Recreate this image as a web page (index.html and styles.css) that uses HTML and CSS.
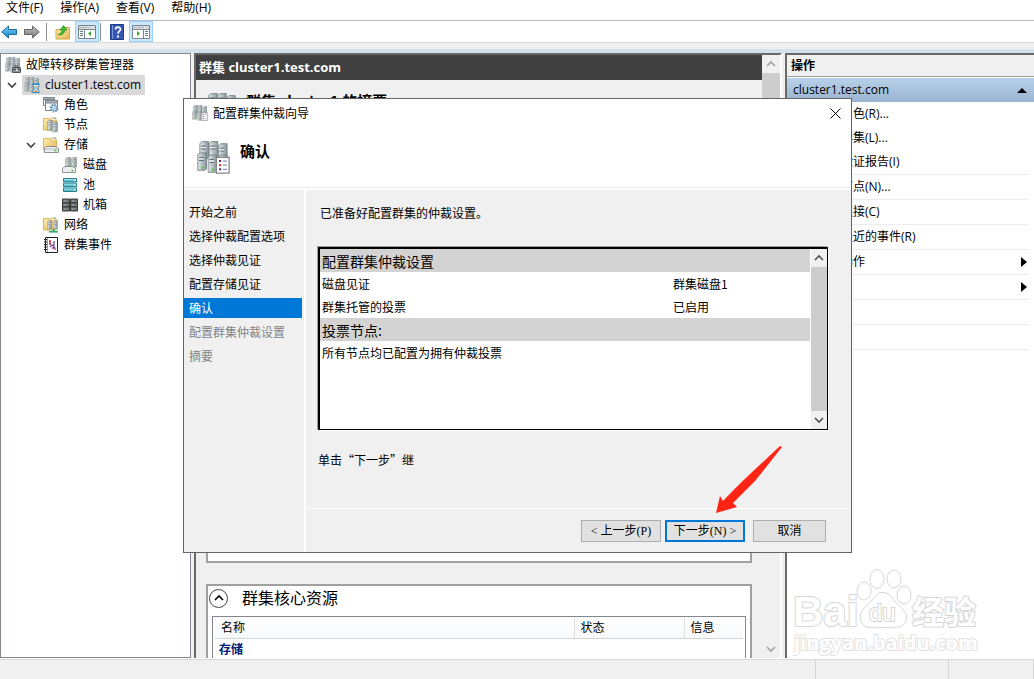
FILE: index.html
```html
<!DOCTYPE html>
<html lang="zh-CN">
<head>
    <meta charset="UTF-8">
    <meta name="viewport" content="width=device-width, initial-scale=1.0">
    <title>故障转移群集管理器</title>
    <link rel="stylesheet" href="styles.css">
</head>
<body>
    <!-- Shared icons -->
    <svg class="defs" width="0" height="0" aria-hidden="true">
        <defs>
            <linearGradient id="metal" x1="0" x2="1">
                <stop offset="0" stop-color="#e6eaeb"/>
                <stop offset="1" stop-color="#87949a"/>
            </linearGradient>
            <linearGradient id="blue" x1="0" x2="0" y1="0" y2="1">
                <stop offset="0" stop-color="#7fd0f7"/>
                <stop offset="1" stop-color="#0d7fc4"/>
            </linearGradient>
            <linearGradient id="gray" x1="0" x2="0" y1="0" y2="1">
                <stop offset="0" stop-color="#c4c4c4"/>
                <stop offset="1" stop-color="#777"/>
            </linearGradient>
            <linearGradient id="folder" x1="0" x2="1" y1="0" y2="1">
                <stop offset="0" stop-color="#fff0b5"/>
                <stop offset="1" stop-color="#e3b54e"/>
            </linearGradient>
        </defs>
        <symbol id="tower" viewBox="0 0 5 9">
            <path d="M.4 1.2 1.6.3H4.6V8L3.6 8.7H.4z" fill="url(#metal)" stroke="#6f7c82" stroke-width=".4"/>
            <path d="M1 2.5h2.2M1 3.9h2.2" stroke="#5f6d74" stroke-width=".5"/>
            <path d="M1 3.2h2.2" stroke="#fff" stroke-width=".5"/>
            <rect x="2.2" y="7" width=".9" height=".9" fill="#4fc51e"/>
        </symbol>
        <symbol id="servers" viewBox="0 0 16 16">
            <use href="#tower" x="1" y="0" width="5" height="9"/>
            <use href="#tower" x="5.5" y="0" width="5" height="9"/>
            <use href="#tower" x="10" y="1" width="5" height="9"/>
            <use href="#tower" x="0" y="5" width="5" height="10"/>
            <use href="#tower" x="5" y="6" width="5" height="10"/>
            <use href="#tower" x="10" y="6" width="5" height="10"/>
        </symbol>
        <symbol id="manager" viewBox="0 0 16 16">
            <use href="#servers"/>
            <rect x="7.5" y="10.5" width="8" height="5" rx=".5" fill="#8b9296" stroke="#50585c"/>
            <path d="M10 10.500V9h3v1.500M8 12.500h7" fill="none" stroke="#50585c"/>
            <path d="M11 12h1.500v2H11z" fill="#eee"/>
        </symbol>
        <symbol id="cluster" viewBox="0 0 16 16">
            <use href="#servers"/>
            <path d="M9 7h6v2l-2 2.500 2 2.500v2H9v-2l2-2.500L9 9z" fill="#e6f5fd" stroke="#2586b8" stroke-width=".8"/>
            <path d="M8.500 7.300h7M8.500 15.700h7" stroke="#2b8ec2" stroke-width="1.300"/>
            <path d="M10 15l2-2.500 2 2.500zM10.500 9h3L12 11z" fill="#e38b3e"/>
        </symbol>
        <symbol id="wizard" viewBox="0 0 16 16">
            <use href="#servers"/>
            <path d="M9.400 7.900h6.200v7.700H9.400z" fill="#fff" stroke="#858585" stroke-width=".6"/>
            <path d="M10.700 9.200h1v1h-1zM10.700 13.200h1v1h-1z" fill="#4d2b62"/>
            <path d="M10.700 11.200h1v1h-1z" fill="#e02a20"/>
            <path d="M12.500 9.700h2M12.500 11.700h2M12.500 13.700h2" stroke="#8792bb" stroke-width=".6"/>
        </symbol>
        <symbol id="roles" viewBox="0 0 16 16">
            <path d="M.5.500h11v8H.5z" fill="#f5f7f8" stroke="#7c878d"/>
            <path d="M.5.500h11v2H.5z" fill="#a8b1b6" stroke="#7c878d"/>
            <path d="M2.500 3.500h12v10h-12z" fill="#fff" stroke="#7c878d"/>
            <path d="M2.500 3.500h12v2.500h-12z" fill="#a8b1b6" stroke="#7c878d"/>
            <circle cx="11" cy="11" r="3.500" fill="#d9ecfa" stroke="#6790b7" stroke-width="2" stroke-dasharray="1.400 1.300"/>
            <circle cx="11" cy="11" r="2.800" fill="#cfe3f4" stroke="#6790b7" stroke-width=".8"/>
            <circle cx="11" cy="11" r="1.200" fill="#fff" stroke="#6790b7" stroke-width=".5"/>
        </symbol>
        <symbol id="folder-base" viewBox="0 0 16 16">
            <path d="M.5 1.500h6l1 1.500h6v10H.5z" fill="url(#folder)" stroke="#d3a843" stroke-width=".8"/>
            <path d="M8 .8h5v3H8z" fill="#fff3c8" stroke="#d3a843" stroke-width=".6"/>
            <path d="M10.500 1.500h2" stroke="#4ba8e8"/>
        </symbol>
        <symbol id="nodes" viewBox="0 0 16 16">
            <use href="#folder-base"/>
            <use href="#tower" x="4" y="3" width="6" height="11"/>
            <use href="#tower" x="9" y="4" width="6" height="12"/>
        </symbol>
        <symbol id="storage" viewBox="0 0 16 16">
            <use href="#folder-base"/>
            <path d="M3 9.500h10l2.500 2v4H1.500v-4z" fill="#eceef0" stroke="#747c81" stroke-width=".8"/>
            <path d="M2 12h13" stroke="#9da5a9" stroke-width=".7"/>
            <rect x="11.500" y="13" width="2" height="1.300" fill="#42b924"/>
        </symbol>
        <symbol id="disks" viewBox="0 0 16 16">
            <use href="#tower" x="3" y="0" width="6" height="11"/>
            <use href="#tower" x="9" y="0" width="6" height="11"/>
            <path d="M3 9.500h8l2.500 2v4H.5v-4z" fill="#eceef0" stroke="#747c81" stroke-width=".8"/>
            <rect x="9.500" y="13" width="2" height="1.300" fill="#42b924"/>
        </symbol>
        <symbol id="pool" viewBox="0 0 16 16">
            <path d="M1.500 1.500h13v3.500h-13zM1.500 6.200h13v3.500h-13zM1.500 11h13v3.500h-13z" fill="#57bfcb" stroke="#26808f"/>
            <path d="M2 2.500h12M2 7.200h12M2 12h12" stroke="#b8edf2" stroke-width=".8"/>
            <path d="M12 3.500h1.500M12 8.200h1.500M12 13h1.500" stroke="#fff"/>
        </symbol>
        <symbol id="chassis" viewBox="0 0 16 16">
            <path d="M.5 2h7v12h-7zM8.500 2h7v12h-7z" fill="#66696b" stroke="#3c3c3c"/>
            <path d="M1 5.800h6.500M1 9.800h6.500M9 5.800h6.500M9 9.800h6.500" stroke="#2c2c2c" stroke-width=".8"/>
            <path d="M1.500 4h3M1.500 8h3M1.500 12h3M9.500 4h3M9.500 8h3M9.500 12h3" stroke="#b4b8ba"/>
            <path d="M5.500 4h1M5.500 8h1M5.500 12h1M13.500 4h1M13.500 8h1M13.500 12h1" stroke="#6bd837"/>
        </symbol>
        <symbol id="network" viewBox="0 0 16 16">
            <use href="#folder-base"/>
            <use href="#tower" x="4" y="3" width="5" height="10"/>
            <use href="#tower" x="10" y="3" width="5" height="10"/>
            <path d="M6 14.800h9" stroke="#20ad78" stroke-width="1.600"/>
            <path d="M10.500 12v3" stroke="#20ad78" stroke-width="2"/>
        </symbol>
        <symbol id="events" viewBox="0 0 16 16">
            <path d="M2.500.500h12v15h-12z" fill="#fff" stroke="#222"/>
            <path d="M4.500 1v14" stroke="#999"/>
            <path d="M1 2.500h3M1 5h3M1 7.500h3M1 10h3M1 12.500h3" stroke="#222"/>
            <path d="M7 3v5M9 11h2" stroke="#d02638" stroke-width="1.600"/>
            <path d="M7 10l2-2 2 1V4M10 10l2 1v2" fill="none" stroke="#5b3da6" stroke-width="1.200"/>
        </symbol>
        <symbol id="chev-down" viewBox="0 0 10 10"><path d="M1 3l4 4 4-4" fill="none" stroke="currentColor" stroke-width="1.600"/></symbol>
        <symbol id="chev-up" viewBox="0 0 10 10"><path d="M1 7l4-4 4 4" fill="none" stroke="currentColor" stroke-width="1.600"/></symbol>
        <symbol id="console" viewBox="0 0 18 14">
            <path d="M.5.500h17v13H.5z" fill="#fff" stroke="#7b868e"/>
            <path d="M1 1.500h16v2H1z" fill="#b3bcc2"/>
            <path d="M12 2.500h1.500M14.500 2.500H16" stroke="#fff"/>
            <path d="M1 4.500h16" stroke="#7b868e"/>
        </symbol>
    </svg>

    <nav class="menubar">
        <a href="#">文件(F)</a>
        <a href="#">操作(A)</a>
        <a href="#">查看(V)</a>
        <a href="#">帮助(H)</a>
    </nav>

    <div class="toolbar">
        <button class="tool" aria-label="后退">
            <svg width="16" height="16" viewBox="0 0 16 16"><path d="M.7 8 7.500 2v3.500h8v5h-8V14z" fill="url(#blue)" stroke="#1b6ea8"/></svg>
        </button>
        <button class="tool" aria-label="前进">
            <svg width="16" height="16" viewBox="0 0 16 16"><path d="M15.300 8 8.500 2v3.500h-8v5h8V14z" fill="url(#gray)" stroke="#666"/></svg>
        </button>
        <span class="sep"></span>
        <button class="tool" aria-label="向上一级">
            <svg width="16" height="16" viewBox="0 0 16 16">
                <path d="M1 5.500h6l1.500-2h6v11.500H1z" fill="url(#folder)" stroke="#d3a843"/>
                <path d="M3 10.500c2.500-.5 4-2 4.200-4.500H5L8.500 1.500 12 6H9.800C9.500 9.500 7 11.500 3 10.500z" fill="#3fbf34" stroke="#21861b" stroke-width=".7"/>
            </svg>
        </button>
        <button class="tool on" aria-label="显示/隐藏控制台树">
            <svg width="18" height="14" viewBox="0 0 18 14">
                <use href="#console"/>
                <path d="M6.500 5v8" stroke="#7b868e"/>
                <path d="M2 6.500h3M2 8.500h3M2 10.500h3" stroke="#6a7680"/>
                <path d="M13 6v5l-3-2.500z" fill="#35a52b"/>
            </svg>
        </button>
        <span class="sep"></span>
        <button class="tool" aria-label="帮助">
            <svg width="14" height="16" viewBox="0 0 14 16">
                <path d="M.5.500h13v15H.5z" fill="#3658b4" stroke="#1e3a86"/>
                <path d="M2.500 1v14" stroke="#7f9be0"/>
                <path d="M5.500 5.500c0-3 5-3 5-.3 0 2-2.500 2-2.500 4.500" fill="none" stroke="#fff" stroke-width="1.700"/>
                <path d="M7 11.500h2v2H7z" fill="#fff"/>
            </svg>
        </button>
        <button class="tool on" aria-label="显示/隐藏操作窗格">
            <svg width="18" height="14" viewBox="0 0 18 14">
                <use href="#console"/>
                <path d="M11.500 5v8" stroke="#7b868e"/>
                <path d="M13 6.500h3M13 8.500h3M13 10.500h3" stroke="#6a7680"/>
                <path d="M5 6v5l3-2.500z" fill="#35a52b"/>
            </svg>
        </button>
    </div>

    <main class="workspace">
        <!-- Console tree -->
        <aside class="tree-pane">
            <ul class="tree">
                <li>
                    <a class="node" href="#"><svg class="ico"><use href="#manager"/></svg>故障转移群集管理器</a>
                    <ul>
                        <li>
                            <div class="row">
                                <svg class="twist"><use href="#chev-down"/></svg>
                                <a class="node selected" href="#"><svg class="ico"><use href="#cluster"/></svg>cluster1.test.com</a>
                            </div>
                            <ul class="nested">
                                <li class="leaf"><a class="node" href="#"><svg class="ico"><use href="#roles"/></svg>角色</a></li>
                                <li class="leaf"><a class="node" href="#"><svg class="ico"><use href="#nodes"/></svg>节点</a></li>
                                <li>
                                    <div class="row">
                                        <svg class="twist"><use href="#chev-down"/></svg>
                                        <a class="node" href="#"><svg class="ico"><use href="#storage"/></svg>存储</a>
                                    </div>
                                    <ul class="nested">
                                        <li class="leaf"><a class="node" href="#"><svg class="ico"><use href="#disks"/></svg>磁盘</a></li>
                                        <li class="leaf"><a class="node" href="#"><svg class="ico"><use href="#pool"/></svg>池</a></li>
                                        <li class="leaf"><a class="node" href="#"><svg class="ico"><use href="#chassis"/></svg>机箱</a></li>
                                    </ul>
                                </li>
                                <li class="leaf"><a class="node" href="#"><svg class="ico"><use href="#network"/></svg>网络</a></li>
                                <li class="leaf"><a class="node" href="#"><svg class="ico"><use href="#events"/></svg>群集事件</a></li>
                            </ul>
                        </li>
                    </ul>
                </li>
            </ul>
        </aside>

        <!-- Details -->
        <section class="detail-pane">
            <div class="detail">
                <h1 class="detail-title">群集 cluster1.test.com</h1>
                <div class="detail-body">
                    <div class="summary-head">
                        <svg width="32" height="32"><use href="#servers"/></svg>
                        <h2>群集 cluster1 的摘要</h2>
                    </div>
                    <div class="group summary"></div>
                    <div class="group resources">
                        <div class="group-head">
                            <button class="collapse" aria-label="折叠"><svg width="10" height="10"><use href="#chev-up"/></svg></button>
                            <h3>群集核心资源</h3>
                        </div>
                        <div class="list">
                            <table>
                                <thead>
                                    <tr><th>名称</th><th class="c-state">状态</th><th class="c-info">信息</th></tr>
                                </thead>
                                <tbody>
                                    <tr><td class="cat" colspan="3">存储</td></tr>
                                </tbody>
                            </table>
                        </div>
                    </div>
                </div>
            </div>
            <div class="scroll pane-scroll">
                <svg class="arrow"><use href="#chev-up"/></svg>
                <div class="thumb"></div>
                <svg class="arrow"><use href="#chev-down"/></svg>
            </div>
        </section>

        <!-- Actions -->
        <aside class="actions-pane">
            <h2 class="actions-title">操作</h2>
            <button class="actions-head">cluster1.test.com
                <svg width="10" height="5" viewBox="0 0 10 5"><path d="M0 5l5-5 5 5z"/></svg>
            </button>
            <ul class="actions">
                <li><a href="#">配置角色(R)...</a></li>
                <li><a href="#">验证群集(L)...</a></li>
                <li class="line"><a href="#">查看验证报告(I)</a></li>
                <li class="line"><a href="#">添加节点(N)...</a></li>
                <li class="line"><a href="#">关闭连接(C)</a></li>
                <li class="line"><a href="#">重置最近的事件(R)</a></li>
                <li class="line"><a href="#">更多操作<svg width="6" height="10" viewBox="0 0 6 10"><path d="M0 0l6 5-6 5z"/></svg></a></li>
                <li class="line"><a href="#" aria-label="查看"><svg width="6" height="10" viewBox="0 0 6 10"><path d="M0 0l6 5-6 5z"/></svg></a></li>
                <li class="line"><a href="#" aria-label="刷新"></a></li>
                <li class="line"><a href="#" aria-label="属性"></a></li>
            </ul>
        </aside>
    </main>

    <footer class="status">
        <span></span>
        <span class="cell"></span>
        <span class="cell"></span>
    </footer>

    <!-- Quorum wizard -->
    <div class="dialog" role="dialog" aria-labelledby="dialog-title">
        <div class="titlebar">
            <svg class="ico"><use href="#wizard"/></svg>
            <span id="dialog-title">配置群集仲裁向导</span>
            <button class="close" aria-label="关闭">
                <svg width="11" height="11" viewBox="0 0 11 11"><path d="M.5.500l10 10M10.500.500l-10 10" stroke="#000"/></svg>
            </button>
        </div>
        <header class="dialog-head">
            <svg width="33" height="33"><use href="#wizard"/></svg>
            <h2>确认</h2>
        </header>
        <div class="dialog-main">
            <ol class="steps">
                <li>开始之前</li>
                <li>选择仲裁配置选项</li>
                <li>选择仲裁见证</li>
                <li>配置存储见证</li>
                <li class="current">确认</li>
                <li class="todo">配置群集仲裁设置</li>
                <li class="todo">摘要</li>
            </ol>
            <div class="page">
                <div class="page-body">
                    <p class="lead">已准备好配置群集的仲裁设置。</p>
                    <div class="report">
                        <table>
                            <tr><th colspan="2">配置群集仲裁设置</th></tr>
                            <tr><td>磁盘见证</td><td class="value">群集磁盘1</td></tr>
                            <tr><td>群集托管的投票</td><td class="value">已启用</td></tr>
                            <tr><th colspan="2">投票节点:</th></tr>
                            <tr><td colspan="2">所有节点均已配置为拥有仲裁投票</td></tr>
                        </table>
                        <div class="scroll">
                            <svg class="arrow"><use href="#chev-up"/></svg>
                            <div class="thumb"></div>
                            <svg class="arrow"><use href="#chev-down"/></svg>
                        </div>
                    </div>
                    <p class="hint">单击“下一步”继</p>
                </div>
                <div class="buttons">
                    <button class="btn">&lt; 上一步(P)</button>
                    <button class="btn primary">下一步(N) &gt;</button>
                    <button class="btn cancel">取消</button>
                </div>
            </div>
        </div>
        <svg class="pointer" width="68" height="70" viewBox="0 0 68 70" aria-hidden="true">
            <path d="M65 1 67 2 40 36 18 58 22 62 1 68 5 51 8 56C25 38 45 20 65 1z" fill="#ff2414"/>
        </svg>
    </div>

    <svg class="watermark" width="190" height="92" viewBox="0 0 190 92">
        <g class="outline">
            <text class="wm-latin" x="0" y="59">Bai</text>
            <ellipse cx="71" cy="24" rx="7" ry="9"/>
            <ellipse cx="84" cy="12" rx="7" ry="9.500"/>
            <ellipse cx="101" cy="12" rx="7" ry="9"/>
            <ellipse cx="111" cy="28" rx="7" ry="9"/>
            <path d="M90 25.500c8 0 10 8 16 13 7 6 9 10 7 15-3 9-12 7-23 7s-19 2-22-6c-2-6 0-11 6-16 7-6 8-13 16-13z"/>
            <text class="wm-du" x="76" y="54">du</text>
            <text class="wm-cjk" x="119" y="57">经验</text>
            <text class="wm-url" x="1" y="83">jingyan.baidu.com</text>
        </g>
    </svg>
</body>
</html>
```

FILE: styles.css
```css
/* Base */
* {
    box-sizing: border-box;
}

body {
    margin: 0;
    height: 100vh;
    display: flex;
    flex-direction: column;
    position: relative;
    overflow: hidden;
    background: #f0f0f0;
    color: #000;
    font: 12px/20px "Open Sans", "Noto Sans CJK SC", sans-serif;
}

h1, h2, h3, p, ul, ol {
    margin: 0;
    padding: 0;
}

ul, ol {
    list-style: none;
}

a {
    color: inherit;
    text-decoration: none;
}

button {
    margin: 0;
    padding: 0;
    border: none;
    background: none;
    color: inherit;
    font: inherit;
}

svg {
    flex: none;
}

table {
    border-collapse: collapse;
}

.defs {
    position: absolute;
}

.ico {
    width: 16px;
    height: 16px;
}

/* Menu and toolbar */
.menubar {
    display: flex;
    gap: 17px;
    height: 20px;
    padding: 0 6px;
    background: #fff;
    line-height: 16px;
}

.toolbar {
    display: flex;
    align-items: center;
    height: 23px;
    background: #fff;
    border-top: 1px solid #b4bac8;
    border-bottom: 1px solid #d7d7d7;
}

.tool {
    display: flex;
    align-items: center;
    justify-content: center;
    width: 24px;
    height: 21px;
}

.tool:first-child {
    width: 18px;
}

.tool:nth-child(2) {
    width: 28px;
}

.tool.on {
    background: #cce8ff;
    border: 1px solid #99d1ff;
}

.sep {
    width: 1px;
    height: 18px;
    margin: 0 4px 0 0;
    background: #8c8c8c;
}

.tool.on + .sep {
    margin: 0 4px 0 1px;
}

/* Workspace */
.workspace {
    flex: 1;
    min-height: 0;
    display: flex;
    gap: 3px;
    margin-top: 6px;
    padding-top: 4px;
    border-bottom: 1px solid #fff;
    background: linear-gradient(#d3e0ee 4px, #f0f0f0 4px);
}

.tree-pane {
    width: 191px;
    background: #fff;
    border: 1px solid #828790;
}

.tree {
    padding: 1px 0 0 4px;
}

.row {
    display: flex;
    align-items: center;
}

.twist {
    width: 10px;
    height: 10px;
    margin: 0 5px 0 2px;
    color: #404040;
}

.nested {
    padding-left: 19px;
}

.leaf {
    padding-left: 17px;
}

.node {
    display: flex;
    align-items: center;
    gap: 5px;
    width: max-content;
    height: 20px;
}

.row .node,
.leaf .node {
    padding: 0 4px 0 2px;
}

.node.selected {
    background: #d9d9d9;
}

.detail-pane {
    flex: 1;
    min-width: 0;
    display: flex;
    border: solid #696969;
    border-width: 2px 0 0 2px;
    border-right: 2px solid #fff;
}

.detail {
    flex: 1;
    min-width: 0;
    display: flex;
    flex-direction: column;
}

.detail-title {
    padding: 0 3px;
    background: #404040;
    color: #fff;
    font-size: 13px;
    line-height: 25px;
}

.detail-body {
    flex: 1;
    min-height: 0;
    overflow: hidden;
    padding: 13px 10px 0;
}

.summary-head {
    display: flex;
    gap: 8px;
    height: 37px;
}

.summary-head h2 {
    font: bold 15px/16px "Noto Sans CJK SC", sans-serif;
}

.group {
    background: #fff;
    border: 2px solid #a0a0a0;
}

.summary {
    height: 433px;
    margin-bottom: 21px;
}

.group-head {
    display: flex;
    align-items: center;
    gap: 14px;
    height: 24px;
    margin-bottom: 6px;
}

.group-head h3 {
    font-size: 16px;
    font-weight: normal;
}

.collapse {
    display: flex;
    align-items: center;
    justify-content: center;
    width: 19px;
    height: 19px;
    margin-left: 1px;
    border: 1px solid #444;
    border-radius: 50%;
}

.list {
    margin: 0 4px;
    height: 200px;
    padding: 1px 2px;
    border: 1px solid #828790;
}

.list table {
    width: 100%;
    table-layout: fixed;
}

.list th {
    padding: 0 6px;
    height: 20px;
    border-bottom: 1px solid #d5d5d5;
    border-right: 1px solid #dedfe1;
    background: linear-gradient(#fff, #f7f8fa);
    font-weight: normal;
    text-align: left;
}

.list th:last-child {
    border-right: none;
}

.list .c-state {
    width: 110px;
}

.list .c-info {
    width: 59px;
}

.list .cat {
    padding: 1px 4px;
    color: #001a75;
    font-weight: bold;
}

/* Scrollbars */
.scroll {
    display: flex;
    flex-direction: column;
    width: 16px;
    background: #f0f0f0;
    color: #505050;
}

.scroll .arrow {
    width: 10px;
    height: 10px;
    margin: 4px auto;
}

.scroll .thumb {
    flex: 1;
    background: #cdcdcd;
}

.pane-scroll {
    width: 18px;
    color: #a0a0a0;
}

.pane-scroll .thumb {
    margin-bottom: 180px;
}

/* Actions */
.actions-pane {
    width: 249px;
    background: #fff;
    border: solid #696969;
    border-width: 2px 0 0 2px;
}

.actions-title {
    padding: 1px 4px 0;
    background: #f0f0f0;
    border-bottom: 1px solid #a0a0a0;
    font-size: 12px;
    line-height: 20px;
}

.actions-head {
    display: flex;
    align-items: center;
    justify-content: space-between;
    width: 100%;
    height: 25px;
    padding: 0 7px 0 6px;
    border-top: 1px solid #fff;
    background: linear-gradient(#b9d1ea, #99b4d1);
}

.actions {
    margin-right: 5px;
}

.actions a {
    display: flex;
    align-items: center;
    justify-content: space-between;
    height: 24px;
    padding: 0 2px 0 30px;
}

.actions a svg {
    margin-left: auto;
}

.actions .line {
    border-bottom: 1px solid #ececec;
}

/* Status bar */
.status {
    display: flex;
    height: 20px;
    border-top: 1px solid #d7d7d7;
}

.status span {
    flex: 1;
    border-right: 1px solid #d7d7d7;
}

.status .cell {
    flex: 0 0 133px;
}

.status .cell:last-child {
    flex-basis: 85px;
}

/* Wizard */
.dialog {
    position: absolute;
    top: 98px;
    left: 183px;
    right: 182px;
    border: 1px solid #646464;
    background: #f0f0f0;
    font-family: "Noto Sans CJK SC", sans-serif;
}

.titlebar {
    display: flex;
    align-items: center;
    gap: 5px;
    height: 28px;
    padding: 0 10px 0 8px;
    background: #fff;
}

.close {
    display: flex;
    margin-left: auto;
}

.dialog-head {
    display: flex;
    gap: 10px;
    height: 63px;
    padding: 14px 13px 0;
    background: #fff;
    border-bottom: 2px solid #fff;
    box-shadow: inset 0 -1px #ececec;
}

.dialog-head h2 {
    font-size: 15px;
    line-height: 20px;
}

.dialog-main {
    display: flex;
}

.steps {
    display: flex;
    flex-direction: column;
    gap: 4px;
    width: 122px;
    padding: 12px 2px 0 0;
    border-right: 2px solid #fff;
}

.steps li {
    padding-left: 5px;
}

.steps .current {
    background: #0078d7;
    color: #fff;
}

.steps .todo {
    color: #838383;
}

.page {
    flex: 1;
    min-width: 0;
}

.page-body {
    height: 318px;
    padding: 13px 23px 0 12px;
}

.lead {
    padding-left: 2px;
}

.report {
    display: flex;
    height: 183px;
    margin: 24px 0 20px;
    border: 1px solid #000;
    border-top: 2px solid #000;
    border-left: 2px solid #000;
    box-shadow: -1px -1px #a0a0a0, 1px 1px #fff;
    background: #fff;
}

.report table {
    flex: 1;
    align-self: flex-start;
    margin-right: 1px;
}

.report th,
.report td {
    height: 23px;
    padding: 0 2px;
    text-align: left;
}

.report th {
    background: #d3d3d3;
    font-size: 14px;
    font-weight: normal;
}

.report .value {
    width: 139px;
}

.buttons {
    display: flex;
    justify-content: flex-end;
    align-items: center;
    height: 44px;
    padding-right: 25px;
    border-top: 1px solid #fff;
}

.btn {
    width: 80px;
    height: 22px;
    border: 1px solid #adadad;
    background: #e1e1e1;
    font-family: "Liberation Serif", "Noto Sans CJK SC", serif;
    line-height: 18px;
}

.btn.primary {
    margin: 0 8px 0 4px;
    border: 2px solid #0078d7;
}

.btn.cancel {
    width: 73px;
}

.pointer {
    position: absolute;
    right: 68px;
    bottom: 37px;
}

/* Watermark */
.watermark {
    position: absolute;
    right: 51px;
    bottom: 20px;
}

.outline {
    fill: #fff;
    stroke: #d6d6d6;
    stroke-width: 1;
}

.outline text {
    stroke-width: 2;
    paint-order: stroke;
    font-weight: bold;
}

.wm-latin {
    font-family: "Liberation Sans", sans-serif;
    font-size: 42px;
}

.outline .wm-du {
    font-family: "Liberation Sans", sans-serif;
    font-size: 24px;
    font-weight: normal;
}

.wm-cjk {
    font-family: "Noto Sans CJK SC", sans-serif;
    font-size: 32px;
}

.outline .wm-url {
    font-family: "Open Sans", sans-serif;
    font-size: 20px;
    stroke: #e2e2e2;
}
```
